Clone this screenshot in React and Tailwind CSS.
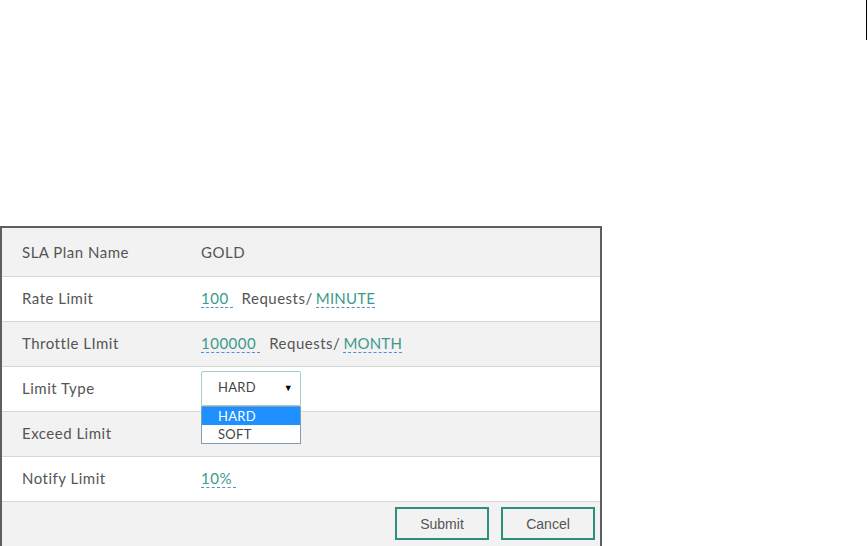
import React from 'react';

const rows = [
  { label: 'SLA Plan Name', kind: 'text', value: 'GOLD' },
  { label: 'Rate Limit', kind: 'rate', amount: '100', unit: 'MINUTE' },
  { label: 'Throttle LImit', kind: 'rate', amount: '100000', unit: 'MONTH' },
  { label: 'Limit Type', kind: 'select' },
  { label: 'Exceed Limit', kind: 'empty' },
  { label: 'Notify Limit', kind: 'editable', value: '10%' },
];

function Editable({ children, tight }) {
  return (
    <span
      className={`text-[#3c9a8c] border-b border-dashed border-[#4a8fd4] leading-[18px] inline-block ${tight ? 'tracking-[0.2px]' : 'pr-[4px]'}`}
    >
      {children}
    </span>
  );
}

function Value({ row }) {
  if (row.kind === 'text') return <span>{row.value}</span>;
  if (row.kind === 'editable') return <Editable>{row.value}</Editable>;
  if (row.kind === 'rate')
    return (
      <span className="flex items-center">
        <Editable>{row.amount}</Editable>
        <span className="ml-[9px] mr-[3px]">Requests/</span>
        <Editable tight>{row.unit}</Editable>
      </span>
    );
  if (row.kind === 'select')
    return (
      <div className="relative tracking-normal">
        <div className="w-[100px] h-[35px] border border-[#9fcfcf] rounded-[2px] bg-white flex items-center justify-between pl-[16px] pr-[7px] text-[13px] text-[#444] tracking-[0.3px]">
          <span>HARD</span>
          <span className="text-[9px] text-black">▼</span>
        </div>
        <div className="absolute left-0 top-[35px] w-[100px] border border-[#7f9db9] bg-white text-[13px] tracking-[0.3px] z-10">
          <div className="bg-[#1e90ff] text-white pl-[16px] h-[18px] leading-[18px]">HARD</div>
          <div className="text-[#444] pl-[16px] h-[18px] leading-[18px]">SOFT</div>
        </div>
      </div>
    );
  return null;
}

export default function App() {
  return (
    <div className="relative w-[868px] h-[546px] bg-white overflow-hidden text-[#555] font-['Lato','Open_Sans',sans-serif] text-[15px] tracking-[0.5px]">
      <div className="absolute left-[866px] top-0 w-[1px] h-[40px] bg-black" />
      <div className="h-[226px]" />
      <div className="w-[602px] border-t-2 border-l-2 border-r-2 border-[#5f5f5f]">
        {rows.map((row, i) => (
          <div
            key={row.label}
            className={`flex items-center border-b border-[#d6d6d6] ${i === 0 ? 'h-[49px]' : 'h-[45px] pb-[2px]'} ${i % 2 === 0 ? 'bg-[#f2f2f2]' : 'bg-white'}`}
          >
            <div className="w-[199px] pl-[20px]">{row.label}</div>
            <Value row={row} />
          </div>
        ))}
        <div className="bg-[#f2f2f2] h-[60px] flex justify-end gap-[12px] pt-[5px] pr-[5px] tracking-normal">
          <button className="w-[94px] h-[33px] border-2 border-[#2a8f7c] text-[#555] text-[14px] pt-[1px] font-['Liberation_Sans',Arial,sans-serif] bg-[#f2f2f2]">
            Submit
          </button>
          <button className="w-[94px] h-[33px] border-2 border-[#2a8f7c] text-[#555] text-[14px] pt-[1px] font-['Liberation_Sans',Arial,sans-serif] bg-[#f2f2f2]">
            Cancel
          </button>
        </div>
      </div>
    </div>
  );
}
